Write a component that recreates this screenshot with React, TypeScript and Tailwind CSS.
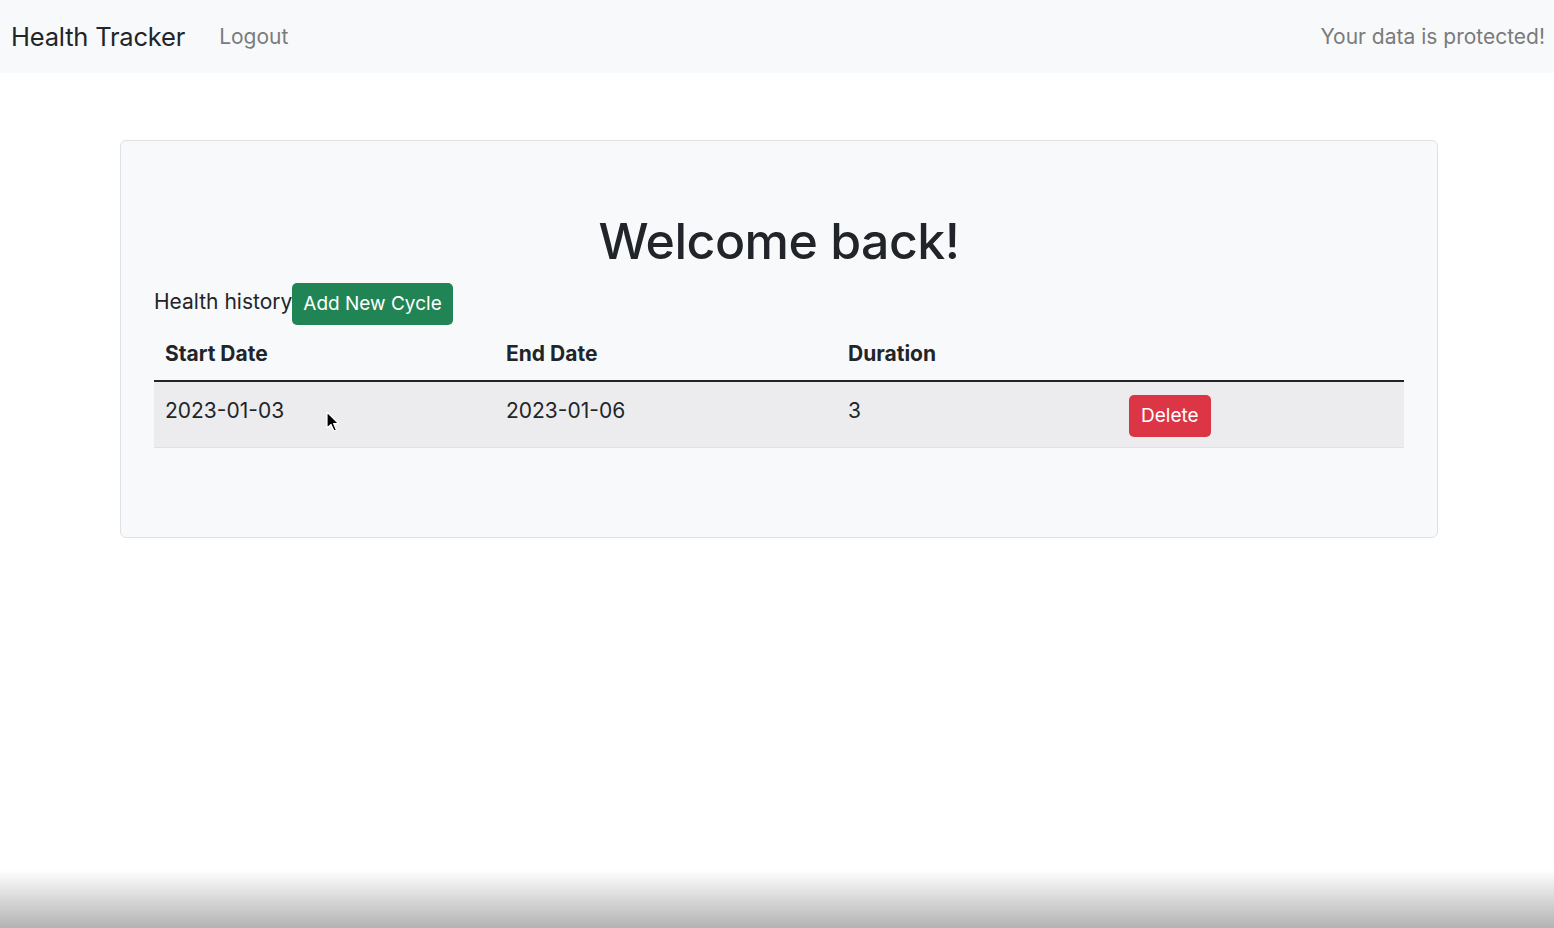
import React from "react";

type Cycle = {
  id: number;
  start: string;
  end: string;
  duration: number;
};

const cycles: Cycle[] = [{ id: 1, start: "2023-01-03", end: "2023-01-06", duration: 3 }];

const Cursor = () => (
  <svg className="absolute left-[326px] top-[411px]" width="14" height="22" viewBox="0 0 14 22">
    <path d="M1 1 L1 17 L5 13.5 L8 20 L10.5 19 L7.6 12.6 L12.5 12.6 Z" fill="#000" stroke="#fff" strokeWidth="1.2" strokeLinejoin="round" />
  </svg>
);

const App = () => {
  return (
    <div className="relative flex flex-col h-screen bg-white text-[#212529] font-['Inter','Noto_Sans',sans-serif] text-[21px] overflow-hidden">
      <nav className="flex items-center h-[73px] bg-[#f8f9fa] shrink-0">
        <span className="pl-[11px] text-[25.5px] leading-none tracking-[-0.2px] text-[#212529]">Health Tracker</span>
        <a className="ml-[34px] text-[21px] text-[#7a7b7c] cursor-pointer">Logout</a>
        <span className="ml-auto pr-[9px] text-[21px] text-[#7a7b7c]">Your data is protected!</span>
      </nav>

      <div className="flex-1 pt-[67px]">
        <div className="ml-[120px] mr-[116px] border border-[#dfe1e5] rounded-[6px] bg-[#f8f9fb] px-[33px] pt-[70px] pb-[89px]">
          <h1 className="text-center text-[50px] leading-[60px] font-medium tracking-[-0.5px]">Welcome back!</h1>

          <div className="flex items-center mt-[12px]">
            <span className="leading-[30px] mt-[-5px]">Health history</span>
            <button className="h-[42px] px-[11px] rounded-[5px] bg-[#218455] text-white text-[19px]">Add New Cycle</button>
          </div>

          <table className="w-full mt-[4px] border-collapse">
            <thead>
              <tr className="border-b-2 border-[#212529]">
                <th className="w-[341px] text-left font-bold px-[11px] pt-[10px] pb-[11px] leading-[30px]">Start Date</th>
                <th className="w-[342px] text-left font-bold px-[11px] pt-[10px] pb-[11px] leading-[30px]">End Date</th>
                <th className="w-[281px] text-left font-bold px-[11px] pt-[10px] pb-[11px] leading-[30px]">Duration</th>
                <th className="px-[11px] pt-[10px] pb-[11px]"></th>
              </tr>
            </thead>
            <tbody>
              {cycles.map((c) => (
                <tr key={c.id} className="bg-[#ececee] border-b border-[#dee2e6]">
                  <td className="align-top px-[11px] pt-[14px] pb-[10px] leading-[30px]">{c.start}</td>
                  <td className="align-top px-[11px] pt-[14px] pb-[10px] leading-[30px]">{c.end}</td>
                  <td className="align-top px-[11px] pt-[14px] pb-[10px] leading-[30px]">{c.duration}</td>
                  <td className="align-top px-[11px] pt-[13px] pb-[10px]">
                    <button className="h-[42px] px-[12px] rounded-[5px] bg-[#db3546] text-white text-[19px]">Delete</button>
                  </td>
                </tr>
              ))}
            </tbody>
          </table>
        </div>
      </div>

      <div className="h-[58px] shrink-0 bg-gradient-to-b from-white to-[#b3b3b3]"></div>

      <Cursor />
    </div>
  );
};

export default App;
